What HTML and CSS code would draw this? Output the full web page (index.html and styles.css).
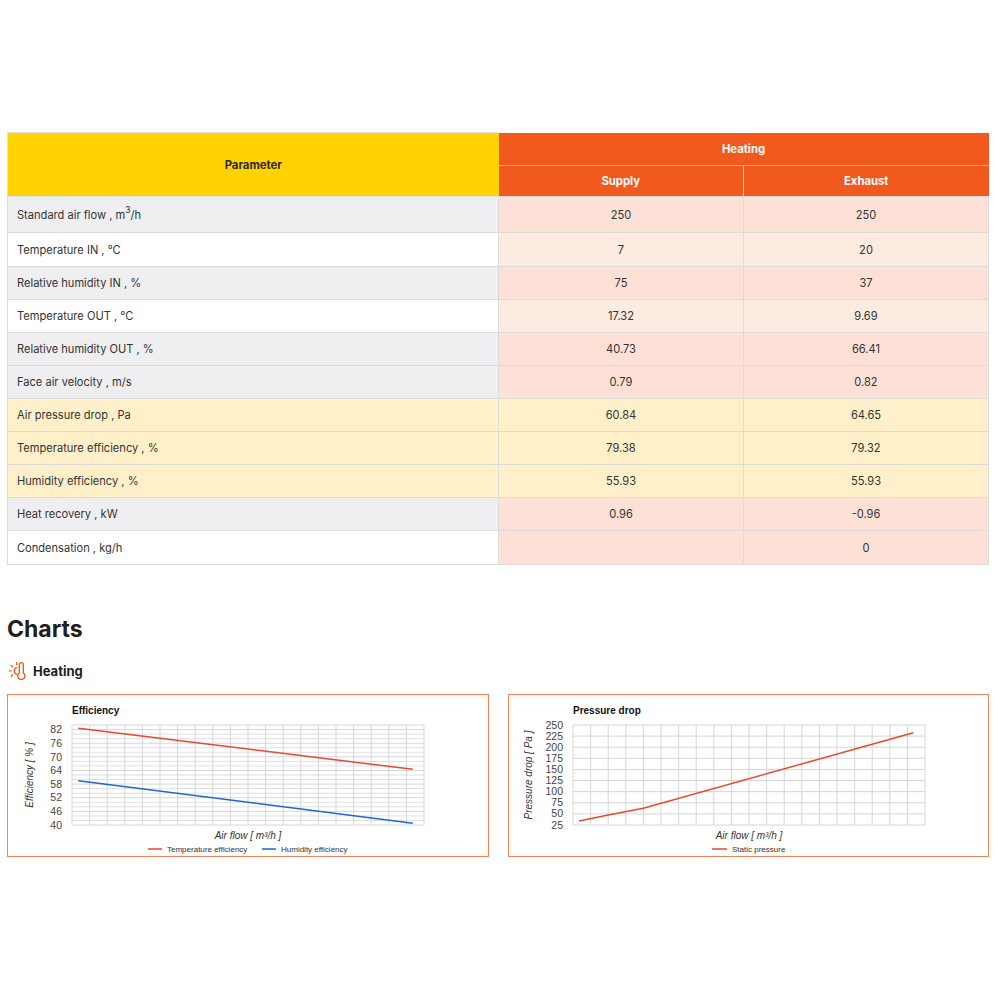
FILE: index.html
```html
<!DOCTYPE html>
<html>
<head>
<meta charset="utf-8">
<link rel="stylesheet" href="styles.css">
</head>
<body>
<div class="page">
  <table class="results">
    <thead>
      <tr>
        <th class="param-head" rowspan="2">Parameter</th>
        <th class="mode-head" colspan="2">Heating</th>
      </tr>
      <tr>
        <th class="sub-head">Supply</th>
        <th class="sub-head">Exhaust</th>
      </tr>
    </thead>
    <tbody>
      <tr class="gray tall"><td>Standard air flow , m<sup>3</sup>/h</td><td class="v dark">250</td><td class="v dark">250</td></tr>
      <tr class="white mid"><td>Temperature IN , °C</td><td class="v light">7</td><td class="v light">20</td></tr>
      <tr class="gray"><td>Relative humidity IN , %</td><td class="v dark">75</td><td class="v dark">37</td></tr>
      <tr class="white"><td>Temperature OUT , °C</td><td class="v light">17.32</td><td class="v light">9.69</td></tr>
      <tr class="gray"><td>Relative humidity OUT , %</td><td class="v dark">40.73</td><td class="v dark">66.41</td></tr>
      <tr class="gray"><td>Face air velocity , m/s</td><td class="v dark">0.79</td><td class="v dark">0.82</td></tr>
      <tr class="yellow"><td>Air pressure drop , Pa</td><td class="v">60.84</td><td class="v">64.65</td></tr>
      <tr class="yellow"><td>Temperature efficiency , %</td><td class="v">79.38</td><td class="v">79.32</td></tr>
      <tr class="yellow"><td>Humidity efficiency , %</td><td class="v">55.93</td><td class="v">55.93</td></tr>
      <tr class="gray"><td>Heat recovery , kW</td><td class="v dark">0.96</td><td class="v dark">-0.96</td></tr>
      <tr class="white mid"><td>Condensation , kg/h</td><td class="v dark"></td><td class="v dark">0</td></tr>
    </tbody>
  </table>

  <h2 class="charts-title">Charts</h2>
  <div class="mode-title">
    <svg class="mode-icon" width="20" height="20" viewBox="0 0 20 20" fill="none" stroke="#f2591c" stroke-width="1.4" stroke-linecap="round" stroke-linejoin="round">
      <path d="M12.3 3.6a2 2 0 0 1 4 0v8.3a3.6 3.6 0 1 1-4 0z"/>
      <path d="M9.6 6.6a3.5 3.5 0 0 0 0 6.6"/>
      <path d="M9.6 1.8v1.6M2.4 9.9h1.6M4.3 4.6l1.1 1.1M4.3 15.2l1.1-1.1"/>
    </svg>
    <span>Heating</span>
  </div>

  <div class="charts">
    <div class="chart">
      <svg class="chart-svg" viewBox="0 0 482 163" width="482" height="163">
        <text class="c-title" x="65" y="20">Efficiency</text>
        <g class="grid-minor">
          <path d="M65 40.09H417M65 44.64H417M65 53.73H417M65 58.27H417M65 67.36H417M65 71.91H417M65 81H417M65 85.55H417M65 94.64H417M65 99.18H417M65 108.27H417M65 112.82H417M65 121.91H417M65 126.45H417"/>
        </g>
        <g class="grid">
          <path d="M65 31H417M65 35.55H417M65 49.18H417M65 62.82H417M65 76.45H417M65 90.09H417M65 103.73H417M65 117.36H417M65 131H417"/>
          <path d="M65 31V131M82.6 31V131M100.2 31V131M117.8 31V131M135.4 31V131M153 31V131M170.6 31V131M188.2 31V131M205.8 31V131M223.4 31V131M241 31V131M258.6 31V131M276.2 31V131M293.8 31V131M311.4 31V131M329 31V131M346.6 31V131M364.2 31V131M381.8 31V131M399.4 31V131M417 31V131"/>
        </g>
        <g class="ylab">
          <text x="55" y="39.3">82</text>
          <text x="55" y="52.9">76</text>
          <text x="55" y="66.5">70</text>
          <text x="55" y="80.2">64</text>
          <text x="55" y="93.8">58</text>
          <text x="55" y="107.4">52</text>
          <text x="55" y="121.1">46</text>
          <text x="55" y="134.7">40</text>
        </g>
        <text class="axis-title" transform="translate(26 81) rotate(-90)" text-anchor="middle">Efficiency [ % ]</text>
        <text class="axis-title" x="241" y="145" text-anchor="middle">Air flow [ m³/h ]</text>
        <path class="s-red" d="M71.3 34.3L405.7 75.3"/>
        <path class="s-blue" d="M71.3 86.7L405.7 129.3"/>
        <path class="s-red" d="M141 155H155"/>
        <text class="legend" x="160" y="158">Temperature efficiency</text>
        <path class="s-blue" d="M255 155H269"/>
        <text class="legend" x="274" y="158">Humidity efficiency</text>
      </svg>
    </div>
    <div class="chart">
      <svg class="chart-svg" viewBox="0 0 482 163" width="482" height="163">
        <text class="c-title" x="65" y="20">Pressure drop</text>
        <g class="grid">
          <path d="M65 31H417M65 42.11H417M65 53.22H417M65 64.33H417M65 75.44H417M65 86.56H417M65 97.67H417M65 108.78H417M65 119.89H417M65 131H417"/>
          <path d="M65 31V131M82.6 31V131M100.2 31V131M117.8 31V131M135.4 31V131M153 31V131M170.6 31V131M188.2 31V131M205.8 31V131M223.4 31V131M241 31V131M258.6 31V131M276.2 31V131M293.8 31V131M311.4 31V131M329 31V131M346.6 31V131M364.2 31V131M381.8 31V131M399.4 31V131M417 31V131"/>
        </g>
        <g class="ylab">
          <text x="55" y="34.5">250</text>
          <text x="55" y="45.6">225</text>
          <text x="55" y="56.7">200</text>
          <text x="55" y="67.8">175</text>
          <text x="55" y="78.9">150</text>
          <text x="55" y="90.1">125</text>
          <text x="55" y="101.2">100</text>
          <text x="55" y="112.3">75</text>
          <text x="55" y="123.4">50</text>
          <text x="55" y="134.5">25</text>
        </g>
        <text class="axis-title" transform="translate(24 81) rotate(-90)" text-anchor="middle">Pressure drop [ Pa ]</text>
        <text class="axis-title" x="241" y="145" text-anchor="middle">Air flow [ m³/h ]</text>
        <path class="s-red" d="M71 127L100.3 121L135.3 114.3L405.3 38.7"/>
        <path class="s-red" d="M204 155H219"/>
        <text class="legend" x="224" y="158">Static pressure</text>
      </svg>
    </div>
  </div>
</div>
</body>
</html>
```
FILE: styles.css
```css
* { box-sizing: border-box; }
body {
  margin: 0;
  background: #fff;
  font-family: Inter, "Noto Sans", sans-serif;
  color: #333;
}
.page {
  padding: 132px 11px 40px 7px;
}
.results {
  width: 982px;
  border-collapse: collapse;
  table-layout: fixed;
  font-size: 11.1px;
}
.results th {
  font-weight: 700;
  font-size: 11.3px;
  text-align: center;
  padding: 0;
}
.param-head {
  width: 491px;
  background: #ffd200;
  color: #2a2a2a;
  border: 1px solid #e2e2e2;
  border-right: none;
}
.mode-head {
  height: 33px;
  background: #f2591c;
  color: #fff;
  border-bottom: 1px solid #f8a47f;
}
.sub-head {
  height: 31px;
  background: #f2591c;
  color: #fff;
}
.sub-head + .sub-head { border-left: 1px solid #fbd4c2; }
.results td {
  height: 33px;
  padding: 0 0 0 9px;
  border: 1px solid #dcdcdc;
  line-height: 16px;
}
.results tr.tall td { height: 36px; }
.results tr.mid td { height: 34px; }
.results td.v {
  text-align: center;
  padding: 0;
}
.results sup { font-size: 8.5px; line-height: 0; vertical-align: 6px; }
tr.gray td { background: #efeff1; }
tr.white td { background: #fff; }
tr.yellow td { background: #fff0c9; }
td.v.dark { background: #fde1d7 !important; }
td.v.light { background: #fdeae1 !important; }

.charts-title {
  margin: 49px 0 0;
  font-size: 23px;
  line-height: 30px;
  font-weight: 700;
  color: #1e1e1e;
}
.mode-title {
  display: flex;
  align-items: center;
  gap: 6px;
  margin-top: 17px;
  height: 20px;
  font-size: 13px;
  font-weight: 700;
  color: #1e1e1e;
}
.mode-icon { margin-left: 0; }
.charts {
  display: grid;
  grid-template-columns: 482px 481px;
  gap: 19px;
  margin-top: 13px;
}
.chart {
  height: 163px;
  border: 1px solid #f4845a;
  overflow: hidden;
}
.chart-svg {
  display: block;
  margin: -1px;
  font-family: "Liberation Sans", Arial, sans-serif;
}
.c-title { font-size: 10px; font-weight: 700; fill: #111; }
.grid path { stroke: #d6d6d6; stroke-width: 1; fill: none; }
.grid-minor path { stroke: #e0e0e0; stroke-width: 1; fill: none; }
.ylab text { font-size: 10.5px; fill: #444; text-anchor: end; }
.axis-title { font-size: 10px; font-style: italic; fill: #333; }
.legend { font-size: 8px; fill: #333; }
.s-red { stroke: #e8492a; stroke-width: 1.5; fill: none; }
.s-blue { stroke: #1f66d0; stroke-width: 1.5; fill: none; }
```
